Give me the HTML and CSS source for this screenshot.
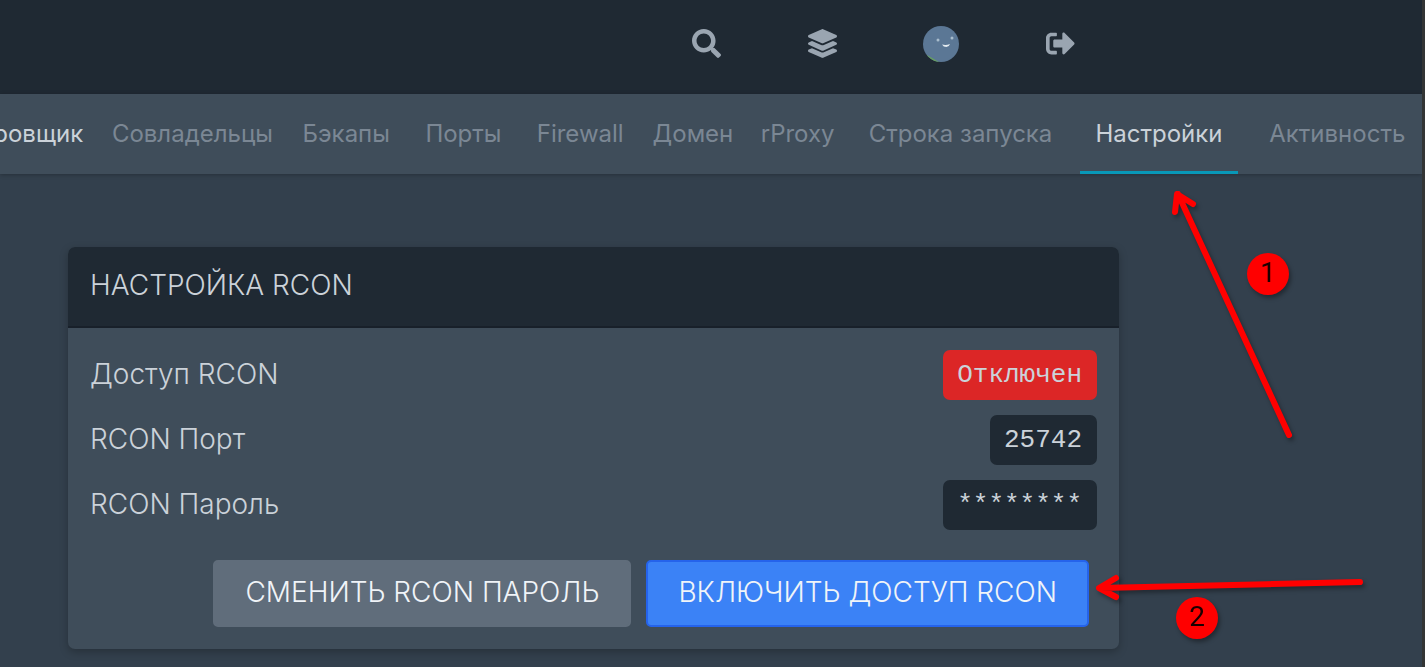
FILE: index.html
```html
<!DOCTYPE html>
<html lang="ru">
<head>
<meta charset="utf-8">
<title>Настройка RCON</title>
<link rel="stylesheet" href="styles.css">
</head>
<body>
<div class="page">
  <header class="topbar">
    <button class="icon-button" aria-label="Поиск">
      <svg class="icon" viewBox="0 0 512 512"><path d="M505 442.700L405.300 343c-4.500-4.500-10.600-7-17-7H372c27.600-35.300 44-79.700 44-128C416 93.100 322.900 0 208 0S0 93.100 0 208s93.100 208 208 208c48.300 0 92.700-16.400 128-44v16.300c0 6.400 2.500 12.500 7 17l99.700 99.700c9.400 9.400 24.600 9.400 33.900 0l28.300-28.300c9.400-9.400 9.400-24.600.1-34zM208 336c-70.700 0-128-57.200-128-128 0-70.700 57.200-128 128-128 70.700 0 128 57.200 128 128 0 70.700-57.200 128-128 128z"/></svg>
    </button>
    <button class="icon-button" aria-label="Серверы">
      <svg class="icon" viewBox="0 0 512 512"><path d="M12.410 148.020l232.940 105.670c6.800 3.090 14.490 3.090 21.290 0l232.940-105.670c16.550-7.510 16.550-32.520 0-40.030L266.650 2.310a25.607 25.607 0 0 0-21.290 0L12.410 107.980c-16.550 7.510-16.550 32.530 0 40.040zm487.180 88.280l-58.090-26.330-161.640 73.270c-7.560 3.430-15.590 5.170-23.860 5.170s-16.290-1.740-23.860-5.170L70.510 209.970l-58.100 26.330c-16.550 7.500-16.550 32.500 0 40l232.940 105.590c6.800 3.080 14.490 3.080 21.290 0L499.590 276.300c16.550-7.500 16.550-32.500 0-40zm0 127.800l-57.870-26.230-161.860 73.370c-7.560 3.430-15.590 5.170-23.860 5.170s-16.290-1.740-23.860-5.170L70.290 337.870 12.410 364.100c-16.550 7.500-16.550 32.500 0 40l232.940 105.590c6.800 3.080 14.490 3.080 21.290 0L499.590 404.100c16.550-7.500 16.550-32.500 0-40z"/></svg>
    </button>
    <button class="icon-button icon-button-avatar" aria-label="Аккаунт">
      <svg class="avatar" viewBox="0 0 36 36">
        <defs><clipPath id="face"><circle cx="18" cy="18" r="18"/></clipPath></defs>
        <g clip-path="url(#face)">
          <rect width="36" height="36" fill="#5b7795"/>
          <path d="M4 29l12 7H4z" fill="#66a05f"/>
          <circle cx="15" cy="14" r="1.500" fill="#a9bdcd"/>
          <circle cx="29" cy="12" r="1.500" fill="#a9bdcd"/>
          <path d="M19 18.500q4 1 8-.5-1 3-3.600 3.100-3 0-4.400-2.600z" fill="#e4ebf0"/>
        </g>
      </svg>
    </button>
    <button class="icon-button" aria-label="Выход">
      <svg class="icon" viewBox="0 0 512 512"><path d="M497 273L329 441c-15 15-41 4.500-41-17v-96H152c-13.300 0-24-10.700-24-24v-96c0-13.300 10.700-24 24-24h136V88c0-21.400 25.900-32 41-17l168 168c9.300 9.400 9.300 24.600 0 34zM192 436v-40c0-6.600-5.400-12-12-12H96c-17.700 0-32-14.300-32-32V160c0-17.700 14.300-32 32-32h84c6.600 0 12-5.400 12-12V76c0-6.600-5.400-12-12-12H96c-53 0-96 43-96 96v192c0 53 43 96 96 96h84c6.600 0 12-5.400 12-12z"/></svg>
    </button>
  </header>

  <nav class="subnav">
    <a class="tab tab-first" href="#">ровщик</a>
    <a class="tab" href="#">Совладельцы</a>
    <a class="tab" href="#">Бэкапы</a>
    <a class="tab" href="#">Порты</a>
    <a class="tab" href="#">Firewall</a>
    <a class="tab" href="#">Домен</a>
    <a class="tab" href="#">rProxy</a>
    <a class="tab" href="#">Строка запуска</a>
    <a class="tab tab-active" href="#">Настройки</a>
    <a class="tab" href="#">Активность</a>
  </nav>

  <main class="content">
    <section class="panel">
      <h2 class="panel-title">НАСТРОЙКА RCON</h2>
      <div class="panel-body">
        <dl class="settings">
          <div class="row"><dt>Доступ RCON</dt><dd class="value value-off">Отключен</dd></div>
          <div class="row"><dt>RCON Порт</dt><dd class="value">25742</dd></div>
          <div class="row"><dt>RCON Пароль</dt><dd class="value">********</dd></div>
        </dl>
        <div class="actions">
          <button class="button">СМЕНИТЬ RCON ПАРОЛЬ</button>
          <button class="button button-primary">ВКЛЮЧИТЬ ДОСТУП RCON</button>
        </div>
      </div>
    </section>
  </main>

  <svg class="notes" viewBox="0 0 330 480" aria-hidden="true">
    <g class="arrow">
      <path d="M197 255L86 14M83 32L85 14L101 24"/>
      <path d="M268 402L8 408M24 398L7 408L24 417"/>
    </g>
    <g class="marker">
      <ellipse cx="176" cy="94" rx="21" ry="21"/>
      <ellipse cx="105" cy="438" rx="21" ry="21"/>
    </g>
    <text class="marker-text" x="176" y="102">1</text>
    <text class="marker-text" x="105" y="446">2</text>
  </svg>
</div>
</body>
</html>
```
FILE: styles.css
```css
* {
  box-sizing: border-box;
}

body {
  margin: 0;
  background: #33404d;
  color: #cbd2d9;
  font-family: Inter, "Open Sans", sans-serif;
}

.page {
  position: relative;
  min-height: 100vh;
  border-right: 3px solid #333535;
  overflow: hidden;
}

.topbar {
  display: flex;
  justify-content: flex-end;
  gap: 60px;
  height: 94px;
  padding: 0 334px 7px 0;
  align-items: center;
  background: #1f2933;
}

.icon-button {
  display: flex;
  justify-content: center;
  align-items: center;
  width: 56px;
  height: 60px;
  padding: 0;
  border: 0;
  background: none;
}

.icon-button-avatar {
  width: 62px;
}

.icon {
  width: 29px;
  height: 29px;
  fill: #9aa5b1;
}

.avatar {
  width: 36px;
  height: 36px;
}

.subnav {
  display: grid;
  grid-template-columns: 90fr 174fr 103fr 101fr 102fr 93fr 86fr 209fr 157fr 169fr;
  gap: 15px;
  height: 80px;
  background: #3f4d5a;
  box-shadow: 0 1px 4px rgba(0, 0, 0, 0.25);
}

.tab {
  display: flex;
  justify-content: center;
  align-items: center;
  min-width: 0;
  padding-top: 2px;
  border-bottom: 3px solid transparent;
  color: #7b8794;
  font-size: 24px;
  text-decoration: none;
  white-space: nowrap;
}

.tab-first {
  justify-content: flex-end;
  padding-right: 7px;
  color: #cbd2d9;
}

.tab-active {
  border-bottom-color: #0898b8;
  color: #cbd2d9;
}

.content {
  padding: 73px 303px 18px 68px;
}

.panel {
  border-radius: 7px;
  background: #3f4d5a;
  box-shadow: 0 3px 8px rgba(0, 0, 0, 0.25);
}

.panel-title {
  height: 81px;
  margin: 0;
  padding: 22px;
  border-bottom: 2px solid #18202a;
  border-radius: 7px 7px 0 0;
  background: #1f2933;
  font-size: 28px;
  font-weight: 300;
  line-height: 32px;
}

.panel-body {
  padding: 22px;
}

.settings {
  display: grid;
  gap: 15px;
  margin: 0;
}

.row {
  display: flex;
  justify-content: space-between;
  font-size: 28px;
  font-weight: 300;
  line-height: 48px;
}

.value {
  height: 50px;
  margin: 0;
  padding: 0 15px 0 14px;
  border-radius: 7px;
  background: #1f2933;
  font-family: "Liberation Mono", monospace;
  font-size: 26px;
  font-weight: 400;
  line-height: 50px;
}

.value-off {
  background: #dc2626;
}

.actions {
  display: flex;
  justify-content: flex-end;
  gap: 15px;
  padding: 30px 8px 0 0;
}

.button {
  height: 67px;
  padding: 0 30px 4px;
  border: 2px solid #606d7b;
  border-radius: 5px;
  background: #606d7b;
  color: #f0f4f8;
  font-family: inherit;
  font-size: 28px;
  font-weight: 300;
}

.button-primary {
  border-color: #2563eb;
  background: #3b82f6;
}

.notes {
  position: absolute;
  top: 180px;
  right: 0;
  width: 330px;
  height: 480px;
  filter: drop-shadow(2px 3px 2px rgba(0, 0, 0, 0.35));
}

.arrow {
  fill: none;
  stroke: #ff0000;
  stroke-width: 6px;
  stroke-linecap: round;
  stroke-linejoin: round;
}

.marker {
  fill: #ff0000;
}

.marker-text {
  fill: #1a0000;
  font-family: Roboto, sans-serif;
  font-size: 28px;
  text-anchor: middle;
}
```
